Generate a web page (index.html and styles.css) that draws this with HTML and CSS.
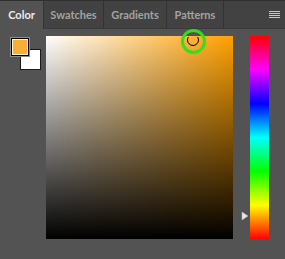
FILE: index.html
```html
<!DOCTYPE html>
<html lang="en">
<head>
    <meta charset="UTF-8">
    <title>Color Panel</title>
    <link rel="stylesheet" href="styles.css">
</head>
<body>
    <div class="panel">
        <div class="tabs">
            <div class="tab active tab-color">Color</div>
            <div class="tab tab-swatches">Swatches</div>
            <div class="tab tab-gradients">Gradients</div>
            <div class="tab tab-patterns">Patterns</div>
            <div class="tab-fill">
                <svg class="menu" width="11" height="8" viewBox="0 0 11 8">
                    <rect x="0" y="0" width="11" height="1" fill="#c8c8c8"/>
                    <rect x="0" y="2" width="11" height="1" fill="#c8c8c8"/>
                    <rect x="0" y="4" width="11" height="1" fill="#c8c8c8"/>
                    <rect x="0" y="6" width="11" height="1" fill="#c8c8c8"/>
                </svg>
            </div>
        </div>

        <div class="body">
            <div class="swatches">
                <div class="bg-swatch"></div>
                <div class="fg-swatch"></div>
            </div>

            <div class="field">
                <div class="marker"><div class="ring"></div></div>
            </div>

            <div class="hue-wrap">
                <div class="hue"></div>
                <svg class="hue-arrow" width="8" height="10" viewBox="0 0 8 10">
                    <path d="M1 1 L7 5 L1 9 Z" fill="#e6e6e6" stroke="#bbb" stroke-width="0.5"/>
                </svg>
            </div>
        </div>
    </div>
</body>
</html>
```

FILE: styles.css
```css
/* Base */
body { margin: 0; background: #535353; font-family: "Open Sans", "Liberation Sans", sans-serif; }
.panel { width: 285px; height: 259px; background: #535353; overflow: hidden; }

/* Tabs */
.tabs { display: flex; height: 29px; background: #424242; border-top: 1px solid #2f2f2f; box-sizing: border-box; }
.tab { height: 28px; font-family: Lato, "Open Sans", sans-serif; font-size: 11px; font-weight: bold; color: #a3a3a3; line-height: 27px; text-align: center; border-right: 1px solid #333; border-bottom: 1px solid #3a3a3a; box-sizing: border-box; white-space: nowrap; }
.tab.active { background: #535353; color: #ececec; border-bottom: none; }
.tab-color { width: 44px; }
.tab-swatches { width: 60px; }
.tab-gradients { width: 63px; }
.tab-patterns { width: 57px; }
.tab-fill { flex: 1; display: flex; justify-content: flex-end; align-items: flex-start; padding: 10px 5px 0 0; border-bottom: 1px solid #3a3a3a; }

/* Body */
.body { display: flex; padding: 7px 0 0 10px; }

/* Foreground / background swatches */
.swatches { position: relative; width: 31px; height: 31px; margin-top: 2px; margin-right: 5px; }
.fg-swatch { position: absolute; left: 1px; top: 0; width: 16px; height: 16px; background: #f9ae35; border: 1px solid #000; box-shadow: 0 0 0 1px #8c8c8c, inset 0 0 0 1px #fdf3d0; }
.bg-swatch { position: absolute; left: 10px; top: 11px; width: 19px; height: 19px; background: #fff; border: 1px solid #1a1a1a; }

/* Saturation / brightness field */
.field { position: relative; width: 187px; height: 203px; background: linear-gradient(to top, #000, rgba(0,0,0,0)), linear-gradient(to right, #fff, #ffa000); }
.marker { position: absolute; left: 147px; top: 4px; width: 0; height: 0; }
.marker::before { content: ""; position: absolute; left: -6px; top: -6px; width: 10px; height: 10px; border: 1px solid #000; border-radius: 50%; clip-path: inset(3px 0 0 0); }
.ring { position: absolute; left: -12px; top: -11px; width: 19px; height: 19px; border: 3px solid #2fe01a; border-radius: 50%; }

/* Hue slider */
.hue-wrap { position: relative; margin-left: 17px; }
.hue { width: 19px; height: 203px; background: linear-gradient(to bottom, #ff0000, #ff00ff 16.6%, #0000ff 33.3%, #00ffff 50%, #00ff00 66.6%, #ffff00 83.3%, #ff0000); }
.hue-arrow { position: absolute; left: -9px; top: 175px; }
```
